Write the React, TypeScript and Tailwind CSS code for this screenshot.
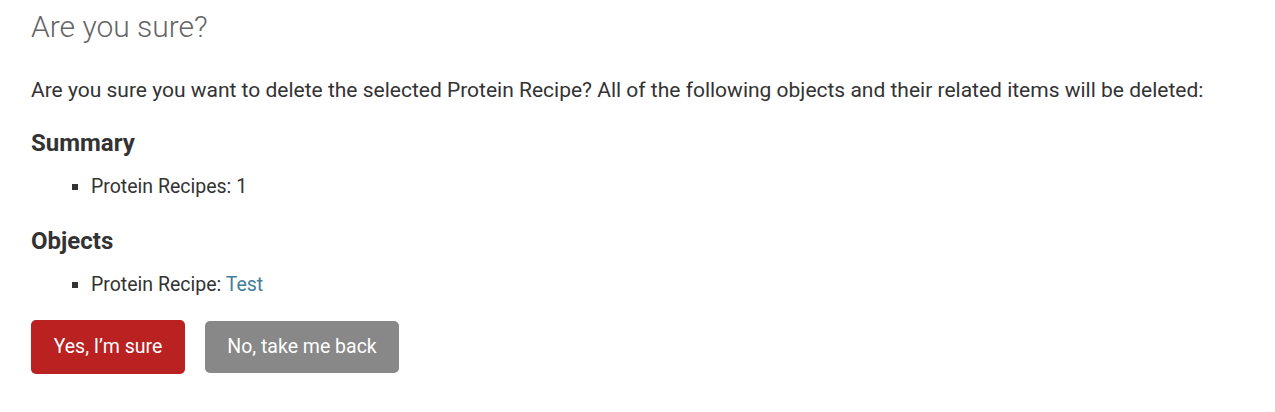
import React from 'react';

const App: React.FC = () => {
  return (
    <div className="min-h-screen bg-white px-[31px] pt-[9px] text-[#333] font-['Roboto','Liberation_Sans',sans-serif] text-[21px]">
      <h1 className="text-[30px] font-light text-[#666] leading-[36px] mb-[30px]">Are you sure?</h1>

      <p className="leading-[30px] mb-[23px]">
        Are you sure you want to delete the selected Protein Recipe? All of the following objects and their related items will be deleted:
      </p>

      <h2 className="text-[24px] font-bold leading-[30px] mb-[15px]">Summary</h2>
      <ul className="list-[square] pl-[60px] mb-[25px] text-[19.5px]">
        <li className="leading-[28px]">Protein Recipes: 1</li>
      </ul>

      <h2 className="text-[24px] font-bold leading-[30px] mb-[15px]">Objects</h2>
      <ul className="list-[square] pl-[60px] mb-[21px] text-[19.5px]">
        <li className="leading-[28px]">
          Protein Recipe: <a href="#" className="text-[#447e9b]">Test</a>
        </li>
      </ul>

      <div className="flex items-center gap-[20px] text-[19.5px]">
        <button className="bg-[#ba2121] text-white rounded-[5px] h-[54px] w-[154px] leading-none">Yes, I’m sure</button>
        <button className="bg-[#888] text-white rounded-[5px] h-[52px] w-[194px] leading-none">No, take me back</button>
      </div>
    </div>
  );
};

export default App;
